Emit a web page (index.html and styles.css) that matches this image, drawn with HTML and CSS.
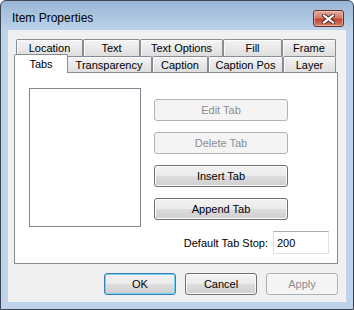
FILE: index.html
```html
<!DOCTYPE html>
<html lang="en">
<head>
  <meta charset="UTF-8">
  <title>Item Properties</title>
  <link rel="stylesheet" href="styles.css">
</head>
<body>
  <div class="window">
    <div class="titlebar">
      <span class="title">Item Properties</span>
      <button class="close-btn" aria-label="Close">
        <svg width="13" height="10" viewBox="0 0 13 10">
          <path d="M2 1.5 L11 8.5 M11 1.5 L2 8.5" stroke="#4a2320" stroke-width="4" stroke-linecap="square"/>
          <path d="M2 1.5 L11 8.5 M11 1.5 L2 8.5" stroke="#fff" stroke-width="2.2" stroke-linecap="square"/>
        </svg>
      </button>
    </div>

    <div class="client">
      <div class="tabs">
        <div class="tab-row row-back">
          <div class="tab">Location</div>
          <div class="tab">Text</div>
          <div class="tab">Text Options</div>
          <div class="tab">Fill</div>
          <div class="tab">Frame</div>
        </div>
        <div class="tab-row row-front">
          <div class="tab active">Tabs</div>
          <div class="tab">Transparency</div>
          <div class="tab">Caption</div>
          <div class="tab">Caption Pos</div>
          <div class="tab">Layer</div>
        </div>
      </div>

      <div class="panel">
        <div class="list-box"></div>
        <div class="tab-actions">
          <button class="btn" disabled>Edit Tab</button>
          <button class="btn" disabled>Delete Tab</button>
          <button class="btn">Insert Tab</button>
          <button class="btn">Append Tab</button>
        </div>
        <div class="tab-stop">
          <label for="tabStop">Default Tab Stop:</label>
          <input id="tabStop" type="text" value="200">
        </div>
      </div>

      <div class="dialog-buttons">
        <button class="btn default">OK</button>
        <button class="btn">Cancel</button>
        <button class="btn" disabled>Apply</button>
      </div>
    </div>
  </div>
</body>
</html>
```

FILE: styles.css
```css
* {
  box-sizing: border-box;
}

body {
  margin: 0;
  font-family: "Liberation Sans", Arial, sans-serif;
  font-size: 11px;
  color: #000;
}

.window {
  width: 354px;
  height: 310px;
  border: 1px solid #3b4350;
  border-radius: 6px 6px 0 0;
  background: linear-gradient(#9ab7d6, #bcd3ea 29px, #bcd3ea);
  padding: 0 7px 7px;
  overflow: hidden;
}

.titlebar {
  height: 29px;
  display: flex;
  justify-content: space-between;
  align-items: flex-start;
  padding: 0 2px 0 4px;
}

.title {
  margin-top: 10px;
  font-size: 12px;
  line-height: 15px;
}

.close-btn {
  margin-top: 9px;
  width: 31px;
  height: 17px;
  padding: 0;
  border: 1px solid #6b2b25;
  border-radius: 3px;
  background: linear-gradient(#e6a99f, #d27a6b 45%, #c2452f 55%, #d2806c);
  box-shadow: inset 0 0 0 1px rgba(255, 220, 210, 0.5);
  display: flex;
  align-items: center;
  justify-content: center;
}

.client {
  background: #f0f0f0;
  height: 272px;
  padding: 9px 8px 0 6px;
}

.tab-row {
  display: grid;
  margin: 0 2px;
}

.row-back {
  grid-template-columns: 67px 57px 83px 59px 54px;
  height: 17px;
}

.row-front {
  grid-template-columns: 50px 86px 56px 75px 53px;
  height: 16px;
  align-items: start;
}

.tab {
  border: 1px solid #898c95;
  border-bottom: none;
  border-radius: 2px 2px 0 0;
  background: linear-gradient(#f4f4f4, #dedede);
  box-shadow: inset 1px 1px 0 #fcfcfc;
  text-align: center;
  padding-top: 1px;
  line-height: 15px;
  white-space: nowrap;
}

.row-front .tab {
  height: 16px;
  line-height: 14px;
}

.row-front .tab.active {
  position: relative;
  z-index: 1;
  margin: -2px -2px 0;
  height: 19px;
  line-height: 16px;
  background: #fff;
  box-shadow: none;
}

.panel {
  height: 192px;
  border: 1px solid #898c95;
  background: #fff;
  padding: 15px 8px 9px 14px;
  display: grid;
  grid-template-columns: 112px 1fr;
  grid-template-rows: 139px auto;
  column-gap: 13px;
  row-gap: 4px;
}

.list-box {
  border: 1px solid #828790;
  background: #fff;
}

.tab-actions {
  width: 134px;
  padding-top: 11px;
  display: flex;
  flex-direction: column;
  gap: 11px;
}

.tab-stop {
  grid-column: 1 / -1;
  display: flex;
  justify-content: flex-end;
  align-items: center;
  gap: 5px;
}

.tab-stop input {
  width: 56px;
  height: 23px;
  border: 1px solid #dbdfe6;
  border-top-color: #abadb3;
  padding: 0 3px;
  font: inherit;
  color: #000;
  outline: none;
}

.btn {
  height: 22px;
  padding: 0;
  font: inherit;
  color: #000;
  border: 1px solid #707070;
  border-radius: 3px;
  background: linear-gradient(#f2f2f2, #ebebeb 50%, #dddddd 51%, #cfcfcf);
  box-shadow: inset 0 0 0 1px #fbfbfb;
}

.btn:disabled {
  color: #8d8d8d;
  border-color: #adb2b5;
  background: #f4f4f4;
  box-shadow: none;
}

.btn.default {
  border-color: #3c7fb1;
  box-shadow: inset 0 0 0 1px #6fd3f5;
}

.dialog-buttons {
  margin-top: 9px;
  display: flex;
  justify-content: flex-end;
  gap: 9px;
}

.dialog-buttons .btn {
  width: 72px;
}
```
